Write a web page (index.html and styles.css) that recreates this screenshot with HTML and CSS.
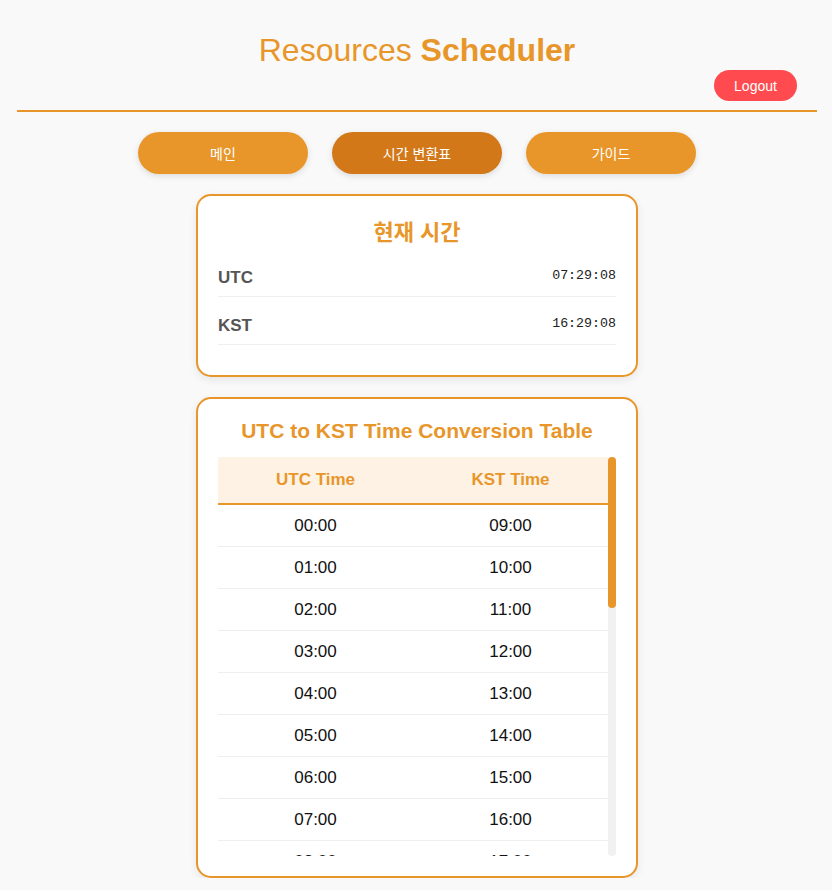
FILE: index.html
```html
<!DOCTYPE html>
<html lang="ko">
<head>
<meta charset="utf-8">
<title>Resources Scheduler</title>
<link rel="stylesheet" href="styles.css">
</head>
<body>
<div class="page">
  <header class="header">
    <h1 class="title">Resources <b>Scheduler</b></h1>
    <div class="header-actions">
      <button class="logout">Logout</button>
    </div>
  </header>
  <nav class="nav">
    <button class="nav-btn">메인</button>
    <button class="nav-btn active">시간 변환표</button>
    <button class="nav-btn">가이드</button>
  </nav>
  <section class="card">
    <h2 class="card-title ko">현재 시간</h2>
    <div class="clock-list">
      <div class="clock-row"><span class="clock-label">UTC</span><span class="clock-time">07:29:08</span></div>
      <div class="clock-row"><span class="clock-label">KST</span><span class="clock-time">16:29:08</span></div>
    </div>
  </section>
  <section class="card">
    <h2 class="card-title">UTC to KST Time Conversion Table</h2>
    <div class="table-area">
      <div class="table-wrap">
        <table class="conv">
          <thead><tr><th>UTC Time</th><th>KST Time</th></tr></thead>
          <tbody>
            <tr><td>00:00</td><td>09:00</td></tr>
            <tr><td>01:00</td><td>10:00</td></tr>
            <tr><td>02:00</td><td>11:00</td></tr>
            <tr><td>03:00</td><td>12:00</td></tr>
            <tr><td>04:00</td><td>13:00</td></tr>
            <tr><td>05:00</td><td>14:00</td></tr>
            <tr><td>06:00</td><td>15:00</td></tr>
            <tr><td>07:00</td><td>16:00</td></tr>
            <tr><td>08:00</td><td>17:00</td></tr>
            <tr><td>09:00</td><td>18:00</td></tr>
            <tr><td>10:00</td><td>19:00</td></tr>
            <tr><td>11:00</td><td>20:00</td></tr>
            <tr><td>12:00</td><td>21:00</td></tr>
            <tr><td>13:00</td><td>22:00</td></tr>
            <tr><td>14:00</td><td>23:00</td></tr>
            <tr><td>15:00</td><td>00:00</td></tr>
            <tr><td>16:00</td><td>01:00</td></tr>
            <tr><td>17:00</td><td>02:00</td></tr>
            <tr><td>18:00</td><td>03:00</td></tr>
            <tr><td>19:00</td><td>04:00</td></tr>
            <tr><td>20:00</td><td>05:00</td></tr>
            <tr><td>21:00</td><td>06:00</td></tr>
            <tr><td>22:00</td><td>07:00</td></tr>
            <tr><td>23:00</td><td>08:00</td></tr>
          </tbody>
        </table>
      </div>
      <div class="scrollbar"><div class="scroll-thumb"></div></div>
    </div>
  </section>
</div>
</body>
</html>
```

FILE: styles.css
```css
* { box-sizing: border-box; }
html, body { margin: 0; padding: 0; }
body {
  background: #f9f9f9;
  font-family: "Liberation Sans", Arial, "Noto Sans CJK KR", sans-serif;
  color: #333;
  overflow: hidden;
}
.page {
  width: 800px;
  margin: 0 0 0 17px;
}
.header {
  border-bottom: 2px solid #e8962a;
  padding: 32px 0 9px;
}
.title {
  margin: 0 0 1px;
  text-align: center;
  font-size: 32px;
  font-weight: normal;
  color: #e8962a;
  line-height: 37px;
}
.title b { font-weight: bold; }
.header-actions {
  display: flex;
  justify-content: flex-end;
  padding-right: 20px;
}
.logout {
  background: #ff4b4f;
  color: #fff;
  border: none;
  border-radius: 16px;
  font-family: "Liberation Sans", Arial, sans-serif;
  font-size: 14px;
  line-height: 17px;
  padding: 8px 20px 6px;
  width: 83px;
  height: 31px;
}
.nav {
  display: flex;
  justify-content: center;
  gap: 24px;
  margin-top: 20px;
}
.nav-btn {
  width: 170px;
  height: 42px;
  border: none;
  border-radius: 21px;
  background: #e8962a;
  color: #fff;
  font-family: "Noto Sans CJK KR", sans-serif;
  font-size: 14px;
  box-shadow: 0 2px 6px rgba(0,0,0,0.12);
}
.nav-btn.active { background: #d27818; }
.card {
  width: 442px;
  margin: 20px auto 0;
  background: #fff;
  border: 2px solid #e8962a;
  border-radius: 15px;
  padding: 20px;
  box-shadow: 0 3px 8px rgba(0,0,0,0.08);
}
.card + .card { margin-top: 20px; }
.card-title {
  margin: 0 0 14px;
  text-align: center;
  font-size: 21px;
  line-height: 24px;
  font-weight: bold;
  color: #e8962a;
}
.card-title.ko {
  font-family: "Noto Sans CJK KR", sans-serif;
  font-size: 22px;
  line-height: 29px;
  margin-bottom: 4px;
}
.clock-list { padding-bottom: 10px; }
.clock-row {
  display: flex;
  justify-content: space-between;
  align-items: center;
  padding: 15px 0 5px;
  height: 48px;
  border-bottom: 1px solid #eee;
}
.clock-label {
  font-size: 17px;
  font-weight: bold;
  color: #555;
}
.clock-time {
  font-family: "Liberation Mono", monospace;
  font-size: 13.3px;
  color: #222;
  margin-top: -4px;
}
.table-area {
  display: flex;
  height: 399px;
}
.table-wrap {
  flex: 1;
  overflow: hidden;
}
.scrollbar {
  width: 8px;
  background: #f1f1f1;
  border-radius: 4px;
}
.scroll-thumb {
  height: 151px;
  background: #e8962a;
  border-radius: 4px;
}
.conv {
  width: 100%;
  border-collapse: collapse;
  table-layout: fixed;
}
.conv th {
  background: #fdf2e4;
  color: #e8962a;
  font-size: 17px;
  line-height: 20px;
  padding: 13px 12px;
  border-bottom: 2px solid #e8962a;
  font-weight: bold;
}
.conv td {
  text-align: center;
  font-size: 17px;
  line-height: 19px;
  padding: 11px;
  color: #111;
  border-bottom: 1px solid #eee;
}
```
